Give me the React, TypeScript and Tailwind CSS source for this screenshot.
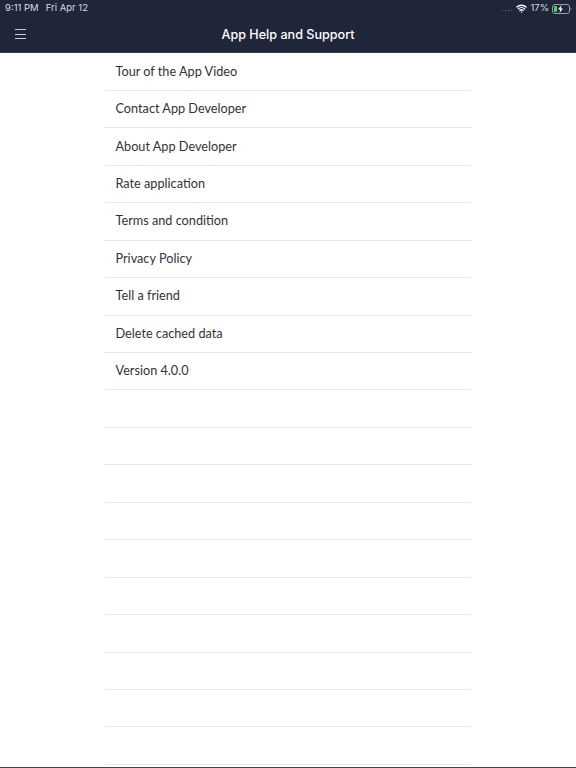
import { Wifi } from "lucide-react";

const items = [
  "Tour of the App Video",
  "Contact App Developer",
  "About App Developer",
  "Rate application",
  "Terms and condition",
  "Privacy Policy",
  "Tell a friend",
  "Delete cached data",
  "Version 4.0.0",
  "", "", "", "", "", "", "", "", "", "",
];

export default function App() {
  return (
    <div className="flex h-[768px] w-[576px] flex-col overflow-hidden bg-white font-['Inter',sans-serif]">
      <header className="h-[53px] shrink-0 border-b border-[#3d4356] bg-[#20263a]">
        <div className="flex h-[15px] items-center justify-between pl-[5px] pr-[4px] pt-[2px] text-[9.5px] text-[#d8dae0]">
          <div className="flex gap-[7px]">
            <span>9:11 PM</span>
            <span>Fri Apr 12</span>
          </div>
          <div className="flex items-center">
            <div className="mr-[4px] mt-[3px] flex gap-[2px]">
              <div className="h-px w-px bg-[#6b7080]" />
              <div className="h-px w-px bg-[#6b7080]" />
              <div className="h-px w-px bg-[#6b7080]" />
              <div className="h-px w-px bg-[#6b7080]" />
            </div>
            <Wifi size={11} strokeWidth={3} className="mr-[3px] text-white" />
            <span className="mr-[3px]">17%</span>
            <svg width="20" height="10" viewBox="0 0 20 10">
              <rect x="0.5" y="0.5" width="17" height="9" rx="2.5" fill="none" stroke="#9a9da8" />
              <rect x="2" y="2" width="3" height="6" rx="1" fill="#4cd964" />
              <path d="M9.5 1 L6 5.5 H8.2 L7.5 9 L11 4.5 H8.8 Z" fill="#ffffff" />
              <path d="M18.6 3.5 C19.6 3.9 19.6 6.1 18.6 6.5 Z" fill="#9a9da8" />
            </svg>
          </div>
        </div>
        <div className="relative flex h-[37px] items-center justify-center pt-[3px]">
          <div className="absolute left-[15px] top-[14px] flex w-[11px] flex-col gap-[3.5px]">
            <div className="h-px bg-[#c9ccd4]" />
            <div className="h-px bg-[#c9ccd4]" />
            <div className="h-px bg-[#c9ccd4]" />
          </div>
          <h1 className="text-[12.6px] font-medium text-white">App Help and Support</h1>
        </div>
      </header>
      <main className="flex-1 overflow-hidden border-b border-[#444] pt-[0.5px]">
        <ul className="mx-auto w-[366px]">
          {items.map((item, i) => (
            <li
              key={i}
              className="flex h-[37.45px] items-center border-b border-[#e6e6e6] pb-px pl-[10.5px] font-['Lato',sans-serif] text-[12.7px] text-[#333]"
            >
              {item}
            </li>
          ))}
        </ul>
      </main>
    </div>
  );
}
